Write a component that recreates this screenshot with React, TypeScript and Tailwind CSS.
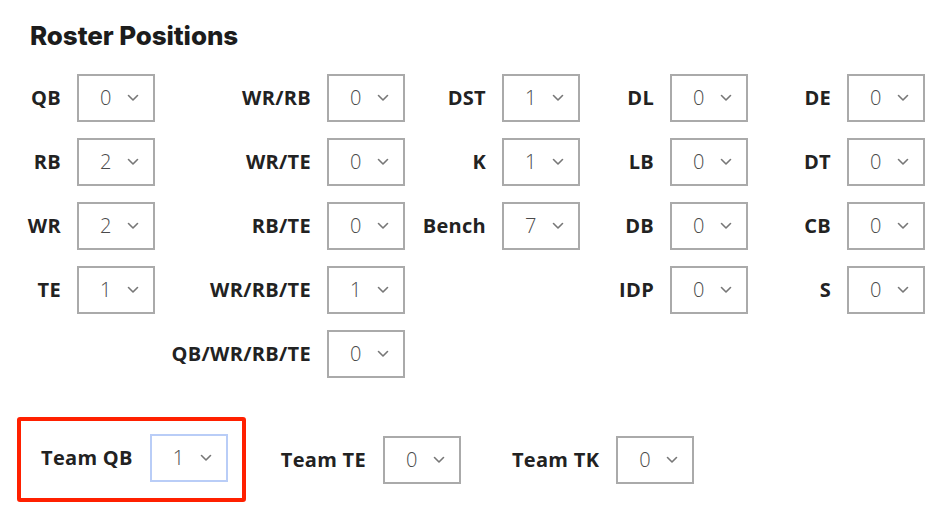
const grid: [string, string][][] = [
  [['QB', '0'], ['WR/RB', '0'], ['DST', '1'], ['DL', '0'], ['DE', '0']],
  [['RB', '2'], ['WR/TE', '0'], ['K', '1'], ['LB', '0'], ['DT', '0']],
  [['WR', '2'], ['RB/TE', '0'], ['Bench', '7'], ['DB', '0'], ['CB', '0']],
  [['TE', '1'], ['WR/RB/TE', '1'], ['', ''], ['IDP', '0'], ['S', '0']],
  [['', ''], ['QB/WR/RB/TE', '0'], ['', ''], ['', ''], ['', '']],
]

function Chevron() {
  return (
    <svg width="12" height="8" viewBox="0 0 12 8" fill="none">
      <polyline points="1.5,1.5 6,6 10.5,1.5" stroke="#777" strokeWidth="1.6" strokeLinecap="round" strokeLinejoin="round" />
    </svg>
  )
}

function Picker({ value, focused = false }: { value: string; focused?: boolean }) {
  return (
    <div
      className={`flex h-[48px] w-[78px] items-center justify-between border-2 pl-[21px] pr-[14px] ${
        focused ? 'border-[#b9cdf7]' : 'border-[#aaaaaa]'
      }`}
    >
      <span className="text-[20px] font-light text-[#4a4a4a]">{value}</span>
      <Chevron />
    </div>
  )
}

function Label({ text }: { text: string }) {
  return <span className="text-[20px] font-bold tracking-[0.3px] text-[#222]">{text}</span>
}

export default function App() {
  return (
    <div className="h-[514px] w-[948px] overflow-hidden bg-white px-[30px] pt-[20px]" style={{ fontFamily: '"Open Sans", sans-serif' }}>
      <h2
        className="text-[26px] font-extrabold leading-[32px] tracking-[-0.1px] text-[#1c1c1c]"
        style={{ fontFamily: 'Inter, "Noto Sans", sans-serif' }}
      >
        Roster Positions
      </h2>

      <div className="mt-[22px] grid grid-cols-[47px_78px_172px_78px_97px_78px_90px_78px_99px_78px] gap-y-[16px]">
        {grid.map((row, r) =>
          row.map(([label, value], c) => (
            <div key={`${r}-${c}`} className="contents">
              <div className="flex h-[48px] items-center justify-end pr-[16px]">{label && <Label text={label} />}</div>
              <div>{value && <Picker value={value} />}</div>
            </div>
          )),
        )}
      </div>

      <div className="mt-[39px] flex items-center">
        <div className="-ml-[13px] flex items-center gap-[17px] rounded-[3px] border-4 border-[#ff2000] pb-[16px] pl-[20px] pr-[14px] pt-[13px]">
          <Label text="Team QB" />
          <Picker value="1" focused />
        </div>
        <div className="ml-[35px] flex items-center gap-[17px]">
          <Label text="Team TE" />
          <Picker value="0" />
        </div>
        <div className="ml-[51px] flex items-center gap-[17px]">
          <Label text="Team TK" />
          <Picker value="0" />
        </div>
      </div>
    </div>
  )
}
